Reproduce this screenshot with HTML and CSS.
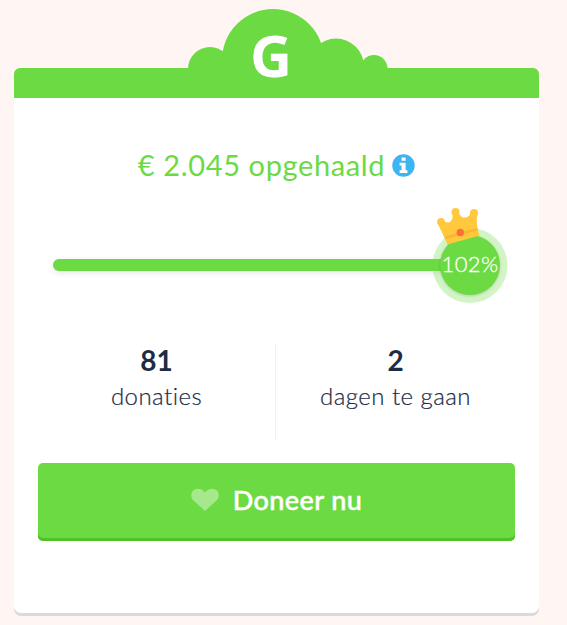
FILE: index.html
```html
<!DOCTYPE html>
<html lang="nl">
<head>
    <meta charset="UTF-8">
    <meta name="viewport" content="width=device-width, initial-scale=1.0">
    <title>Doneer nu</title>
    <link rel="stylesheet" href="styles.css">
</head>
<body>
    <div class="card">
        <!-- Green bar with the cloud on top -->
        <div class="card-header">
            <svg class="cloud" width="200" height="61" viewBox="188 8 200 61">
                <circle cx="210" cy="69" r="22"/>
                <circle cx="273" cy="60" r="51"/>
                <circle cx="336" cy="66.5" r="28"/>
                <circle cx="374" cy="68.5" r="13.5"/>
            </svg>
            <span class="logo">G</span>
        </div>

        <div class="card-body">
            <!-- Amount raised -->
            <div class="raised">
                <span class="raised-text">€ 2.045 opgehaald</span>
                <svg class="info" width="23" height="23" viewBox="0 0 23 23">
                    <circle cx="11.5" cy="11.5" r="11.2" fill="#3db5f2"/>
                    <path fill="#fff" d="M9.600 3.400h4v3.400h-4zM7.600 8.700h6v7.500h1.800v2.700H7.600v-2.700h2v-4.800h-2z"/>
                </svg>
            </div>

            <!-- Progress -->
            <div class="progress">
                <div class="progress-bar"></div>
                <div class="progress-knob">
                    <span class="progress-value">102%</span>
                    <svg class="crown" width="50" height="44" viewBox="434 204 50 44">
                        <path fill="#ffc83d" d="M447.500 244.500L438 224L442.500 219.500C445 222.500 448 223.500 450.500 221.500C453 219 453 216 452 213L458.500 211C459.500 215 461.500 218 465 217.500C468.500 217 469.500 215.500 471 212.500L477.300 215C476 221 477 226 479.500 235.500Z"/>
                        <path fill="#fdb52f" d="M444.800 236.500L476.800 228L477.600 230.500L445.800 239Z"/>
                        <circle cx="441" cy="222" r="3.900" fill="#ffc83d"/>
                        <circle cx="455.500" cy="212" r="4" fill="#ffc83d"/>
                        <circle cx="474" cy="213" r="4" fill="#ffc83d"/>
                        <circle cx="460.300" cy="232.500" r="3.700" fill="#ff6d3b"/>
                    </svg>
                </div>
            </div>

            <!-- Stats -->
            <div class="stats">
                <div class="stat">
                    <strong class="stat-number">81</strong>
                    <span class="stat-label">donaties</span>
                </div>
                <div class="stat">
                    <strong class="stat-number">2</strong>
                    <span class="stat-label">dagen te gaan</span>
                </div>
            </div>

            <button class="donate">
                <svg class="heart" width="28" height="24" viewBox="0 0 28 24">
                    <path d="M14 23L2.500 12.500C-.5 9.500-.2 5 1.800 2.800C5 0 9.500 0 12.500 3L14 4.500L15.500 3C18.500 0 23 0 26.200 2.800C28.200 5 28.500 9.500 25.500 12.500Z"/>
                </svg>
                <span class="donate-text">Doneer nu</span>
            </button>
        </div>
    </div>
</body>
</html>
```
FILE: styles.css
```css
* {
    box-sizing: border-box;
}

body {
    margin: 0;
    height: 625px;
    padding: 68px 28px 0 14px;
    overflow: hidden;
    background-color: #fff5f2;
    font-family: Lato, sans-serif;
    font-variant-ligatures: none;
}

/* White card */
.card {
    height: 545px;
    border-radius: 7px;
    background-color: #fff;
    box-shadow: 0 3px #dadada;
}

.card-header {
    position: relative;
    height: 30px;
    border-radius: 6px 6px 0 0;
    background-color: #6cda42;
}

.cloud {
    position: absolute;
    left: 174px;
    top: -60px;
    fill: #6cda42;
}

.logo {
    position: absolute;
    left: 236px;
    top: -42px;
    color: #fff;
    font: 700 58px/58px "Open Sans", sans-serif;
}

.card-body {
    padding: 46px 24px 0;
}

/* Amount raised */
.raised {
    display: flex;
    align-items: center;
    justify-content: center;
    gap: 7px;
    height: 40px;
    color: #6cda42;
    font-size: 29px;
    letter-spacing: 0.62px;
}

.raised-text {
    white-space: nowrap;
}

.info {
    margin-top: 2px;
}

/* Progress bar and knob */
.progress {
    display: flex;
    align-items: center;
    height: 76px;
    margin: 43px 8px 0 15px;
}

.progress-bar {
    flex: 1;
    height: 12px;
    margin-right: -9px;
    border-radius: 6px 0 0 6px;
    background-color: #6cda42;
    box-shadow: 0 2px 6px rgba(0, 0, 0, 0.1);
}

.progress-knob {
    position: relative;
    display: flex;
    align-items: center;
    justify-content: center;
    width: 60px;
    height: 60px;
    margin-right: 7px;
    border-radius: 50%;
    background-color: #6cda42;
    box-shadow: 0 0.5px 0 7.5px rgba(108, 218, 66, 0.3), 0 1px 3px rgba(0, 0, 0, 0.2);
}

.progress-value {
    padding-bottom: 3px;
    color: #fff;
    font-size: 22px;
    font-weight: 300;
    letter-spacing: 0.4px;
    -webkit-text-stroke: 0.3px #fff;
}

.crown {
    position: absolute;
    left: -6px;
    top: -31px;
}

/* Donations and days left */
.stats {
    display: flex;
    height: 96px;
    margin-top: 41px;
}

.stat {
    flex: 0 0 238px;
    display: flex;
    flex-direction: column;
    align-items: center;
    color: #1d2b45;
}

.stat:first-child {
    border-right: 1px solid #f0f0f0;
}

.stat:last-child {
    flex: 1;
}

.stat-number {
    font-size: 28px;
    line-height: 32px;
}

.stat-label {
    font-size: 24px;
    font-weight: 300;
    line-height: 40px;
    letter-spacing: 0.45px;
    -webkit-text-stroke: 0.2px #1d2b45;
}

/* Donate button */
.donate {
    display: flex;
    align-items: center;
    justify-content: center;
    gap: 14px;
    width: 100%;
    height: 78px;
    margin-top: 23px;
    padding: 0 0 4px;
    border: none;
    border-radius: 5px;
    background-color: #6cda42;
    box-shadow: inset 0 -3px #50c126;
    color: #fff;
    font: 500 27px Lato, sans-serif;
    letter-spacing: 0.4px;
    cursor: pointer;
}

.donate-text {
    padding-bottom: 2px;
    -webkit-text-stroke: 0.5px #fff;
}

.heart {
    fill: rgba(255, 255, 255, 0.4);
}
```
